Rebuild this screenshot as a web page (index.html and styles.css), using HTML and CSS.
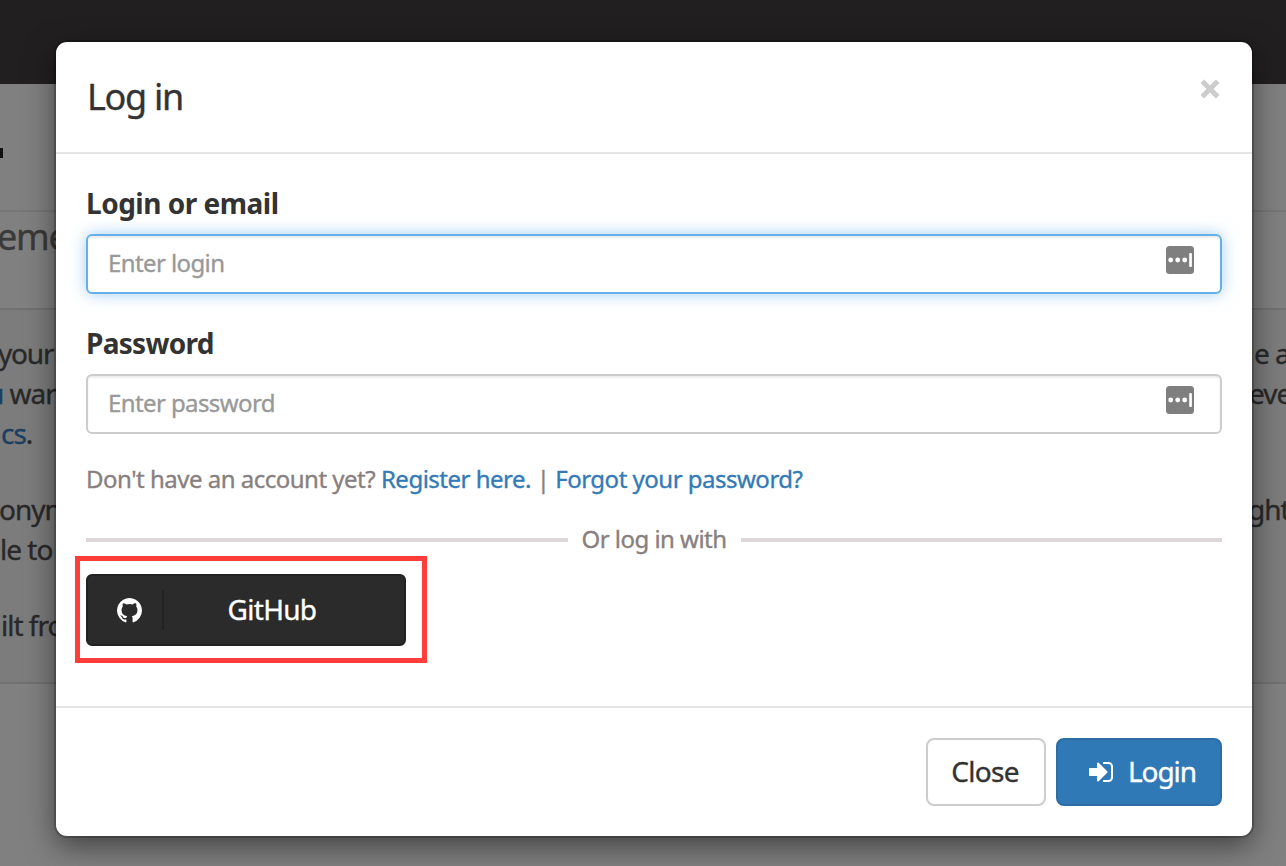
FILE: index.html
```
<!DOCTYPE html>
<html lang="en">
<head>
<meta charset="utf-8">
<title>Log in</title>
<link rel="stylesheet" href="styles.css">
</head>
<body>
<div class="page">
  <div class="navbar"></div>
  <div class="brand"><i class="brand-mark"></i></div>
  <div class="heading"><span class="heading-text">eme</span></div>
  <div class="columns">
    <div class="column">
      <p><span class="l1">your</span><br><span class="l2"><a>u</a> war</span><br><span class="l3"><a>cs</a>.</span></p>
      <p><span class="l4">onym</span><br><span class="l5">le to</span></p>
      <p><span class="l6">ilt fro</span></p>
    </div>
    <div class="column right">
      <p><span class="r1">e a</span><br><span class="r2">eve</span><br>&nbsp;</p>
      <p><span class="r3">ght</span></p>
    </div>
  </div>
</div>
<div class="modal">
  <div class="modal-header">
    <h4 class="title">Log in</h4>
    <svg class="dismiss" viewBox="0 0 20 20"><path d="M2.3 2.3L17.7 17.7M17.7 2.3L2.3 17.7"/></svg>
  </div>
  <div class="modal-body">
    <label class="label label-login">Login or email</label>
    <div class="field focused"><span class="ph-login">Enter login</span>
      <svg class="key" viewBox="0 0 28 28"><rect width="28" height="28" rx="3.5" fill="#7f7f7f"/><g fill="#fff"><circle cx="4.7" cy="14" r="2.4"/><circle cx="11.7" cy="14" r="2.4"/><circle cx="18.7" cy="14" r="2.4"/><rect x="23.2" y="7" width="2.7" height="14" rx="1"/></g></svg>
    </div>
    <label class="label label-pass">Password</label>
    <div class="field"><span class="ph-pass">Enter password</span>
      <svg class="key" viewBox="0 0 28 28"><rect width="28" height="28" rx="3.5" fill="#7f7f7f"/><g fill="#fff"><circle cx="4.7" cy="14" r="2.4"/><circle cx="11.7" cy="14" r="2.4"/><circle cx="18.7" cy="14" r="2.4"/><rect x="23.2" y="7" width="2.7" height="14" rx="1"/></g></svg>
    </div>
    <div class="help">Don't have an account yet? <a>Register here.</a> | <a>Forgot your password?</a></div>
    <div class="divider"><span>Or log in with</span></div>
    <div class="social">
      <div class="github">
        <span class="github-icon"><svg viewBox="128 128 1536 1536"><path d="M896 128q209 0 385.500 103t279.500 279.500 103 385.500q0 251-146.500 451.500t-378.500 277.500q-27 5-40-7t-13-30q0-3 .5-76.500t.5-134.500q0-97-52-142 57-6 102.500-18t94-39 81-66.500 53-105 20.500-150.500q0-119-79-206 37-91-8-204-28-9-81 11t-92 44l-38 24q-93-26-192-26t-192 26q-16-11-42.500-27t-83.500-38.500-85-13.500q-45 113-8 204-79 87-79 206 0 85 20.500 150t52.500 105 80.500 67 94 39 102.500 18q-39 36-49 103-21 10-45 15t-57 5-65.500-21.500-55.500-62.500q-19-32-48.500-52t-49.500-24l-20-3q-21 0-29 4.500t-5 11.500 9 14 13 12l7 5q22 10 43.500 38t31.500 51l10 23q13 38 44 61.500t67 30 69.500 7 55.500-3.500l23-4q0 38 .5 88.500t.5 54.500q0 18-13 30t-40 7q-232-77-378.500-277.500t-146.500-451.500q0-209 103-385.500t279.500-279.500 385.500-103z"/></svg></span>
        <span class="github-name">GitHub</span>
      </div>
      <div class="highlight"></div>
    </div>
  </div>
  <div class="modal-footer">
    <div class="btn close"><span class="close-text">Close</span></div>
    <div class="btn primary"><svg viewBox="128 256 1536 1280"><path d="M1312 896q0 26-19 45l-544 544q-19 19-45 19t-45-19-19-45v-288h-448q-26 0-45-19t-19-45v-384q0-26 19-45t45-19h448v-288q0-26 19-45t45-19 45 19l544 544q19 19 19 45zm352-352v704q0 119-84.500 203.500t-203.500 84.500h-320q-13 0-22.500-9.500t-9.500-22.500q0-4-1-20t-.5-26.500 3-23.500 10-19.500 20.500-6.500h320q66 0 113-47t47-113v-704q0-66-47-113t-113-47h-312l-11.500-1-11.500-3-8-5.500-7-9-2-13.500q0-4-1-20t-.5-26.500 3-23.500 10-19.500 20.500-6.500h320q119 0 203.500 84.500t84.500 203.500z"/></svg><span class="login-text">Login</span></div>
  </div>
</div>
</body>
</html>
```
FILE: styles.css
```
* { box-sizing: border-box; }
html, body { height: 100%; }
body {
  margin: 0;
  position: relative;
  overflow: hidden;
  background: #808080;
  font: 28px/40px "Noto Sans", "Open Sans", sans-serif;
  letter-spacing: -0.7px;
  -webkit-text-stroke: 0.35px currentColor;
  color: #333;
}
svg { display: block; flex: none; }

.page { width: 1286px; height: 866px; overflow: hidden; color: #292929; white-space: nowrap; }
.page a { color: #194062; }
.navbar { height: 84px; background: #221f20; }
.brand { height: 128px; padding-top: 64px; border-bottom: 2px solid #767676; }
.brand-mark { display: block; width: 3px; height: 10px; background: #111; }
.heading { height: 98px; border-bottom: 2px solid #717171; font-size: 36px; line-height: 50px; color: #3a3a3a; }
.heading-text { margin-left: -3px; letter-spacing: -1.2px; }
.columns { display: flex; justify-content: space-between; height: 374px; padding-top: 23px; background: #7c7c7c; border-bottom: 2px solid #717171; }
.column { width: 56px; letter-spacing: -1px; }
.column.right { width: 34px; }
.column p { margin: 0 0 36px; }
.l1 { margin-left: -2px; letter-spacing: -1.2px; }
.l2 { margin-left: -13px; }
.l3 { margin-left: 1px; }
.l4 { margin-left: -1px; }
.l6 { margin-left: 1px; }
.r1 { margin-left: 2px; }
.r2 { margin-left: -3px; }
.r3 { margin-left: -4px; }

.modal {
  position: absolute;
  left: 56px;
  top: 42px;
  width: 1196px;
  height: 794px;
  background: #fff;
  border-radius: 11px;
  box-shadow: 0 0 0 2px rgba(0,0,0,.2), 0 10px 30px rgba(0,0,0,.5);
}
.modal-header { display: flex; justify-content: space-between; height: 112px; padding: 29px 32px 0 31px; border-bottom: 2px solid #e5e5e5; }
.title { margin: 0; font-size: 36px; line-height: 51px; font-weight: 400; letter-spacing: -1.3px; }
.dismiss { width: 20px; height: 20px; margin-top: 8px; stroke: #ccc; stroke-width: 5; }
.modal-body { height: 552px; padding: 29px 30px 0; }
.label { display: block; font-weight: 700; margin-bottom: 11px; -webkit-text-stroke: 0; }
.label-login { letter-spacing: -0.5px; }
.field {
  display: flex;
  justify-content: space-between;
  height: 60px;
  margin-bottom: 29px;
  padding: 10px 26px 0 20px;
  border: 2px solid #ccc;
  border-radius: 6px;
  box-shadow: inset 0 2px 2px rgba(0,0,0,.075);
  font-size: 24px;
  line-height: 34px;
  letter-spacing: -0.6px;
  color: #999;
}
.focused { border-color: #66afe9; box-shadow: inset 0 2px 2px rgba(0,0,0,.075), 0 0 16px rgba(102,175,233,.6); }
.key { width: 28px; height: 28px; }
.help { height: 30px; margin-top: 30px; font-size: 24px; line-height: 30px; letter-spacing: -0.5px; color: #888080; white-space: pre; }
.help a { color: #337ab7; }
.divider { display: flex; align-items: center; gap: 14px; height: 40px; margin: 25px 0 15px; font-size: 24px; letter-spacing: -0.53px; color: #888080; }
.divider::before, .divider::after { content: ""; flex: 1; height: 4px; background: #dcd7d8; }
.divider::before, .divider::after { margin-top: 1px; }
.social { position: relative; }
.github { display: flex; align-items: center; width: 320px; height: 72px; background: #2b2b2b; border: 2px solid #222; border-radius: 6px; color: #fff; }
.github-icon { display: flex; align-items: center; width: 76px; height: 40px; padding-left: 29px; border-right: 2px solid #222; }
.github-icon svg { width: 25px; height: 25px; fill: #fff; }
.github-name { flex: 1; padding: 0 24px 2px 0; text-align: center; }
.highlight { position: absolute; left: -11px; top: -18px; width: 352px; height: 107px; border: 5px solid #ff3e3b; }
.modal-footer { display: flex; justify-content: flex-end; gap: 10px; height: 130px; padding: 30px; border-top: 2px solid #e5e5e5; }
.btn { display: flex; align-items: center; justify-content: center; height: 68px; border: 2px solid #ccc; border-radius: 8px; }
.close { width: 120px; padding-right: 2px; }
.close-text, .login-text { padding-bottom: 2px; }
.login-text { letter-spacing: -1.1px; }
.primary { width: 166px; justify-content: flex-start; padding-left: 31px; gap: 15px; background: #3079b7; border-color: #2e6da4; color: #fff; }
.primary svg { width: 24px; height: 20px; fill: #fff; }
```
